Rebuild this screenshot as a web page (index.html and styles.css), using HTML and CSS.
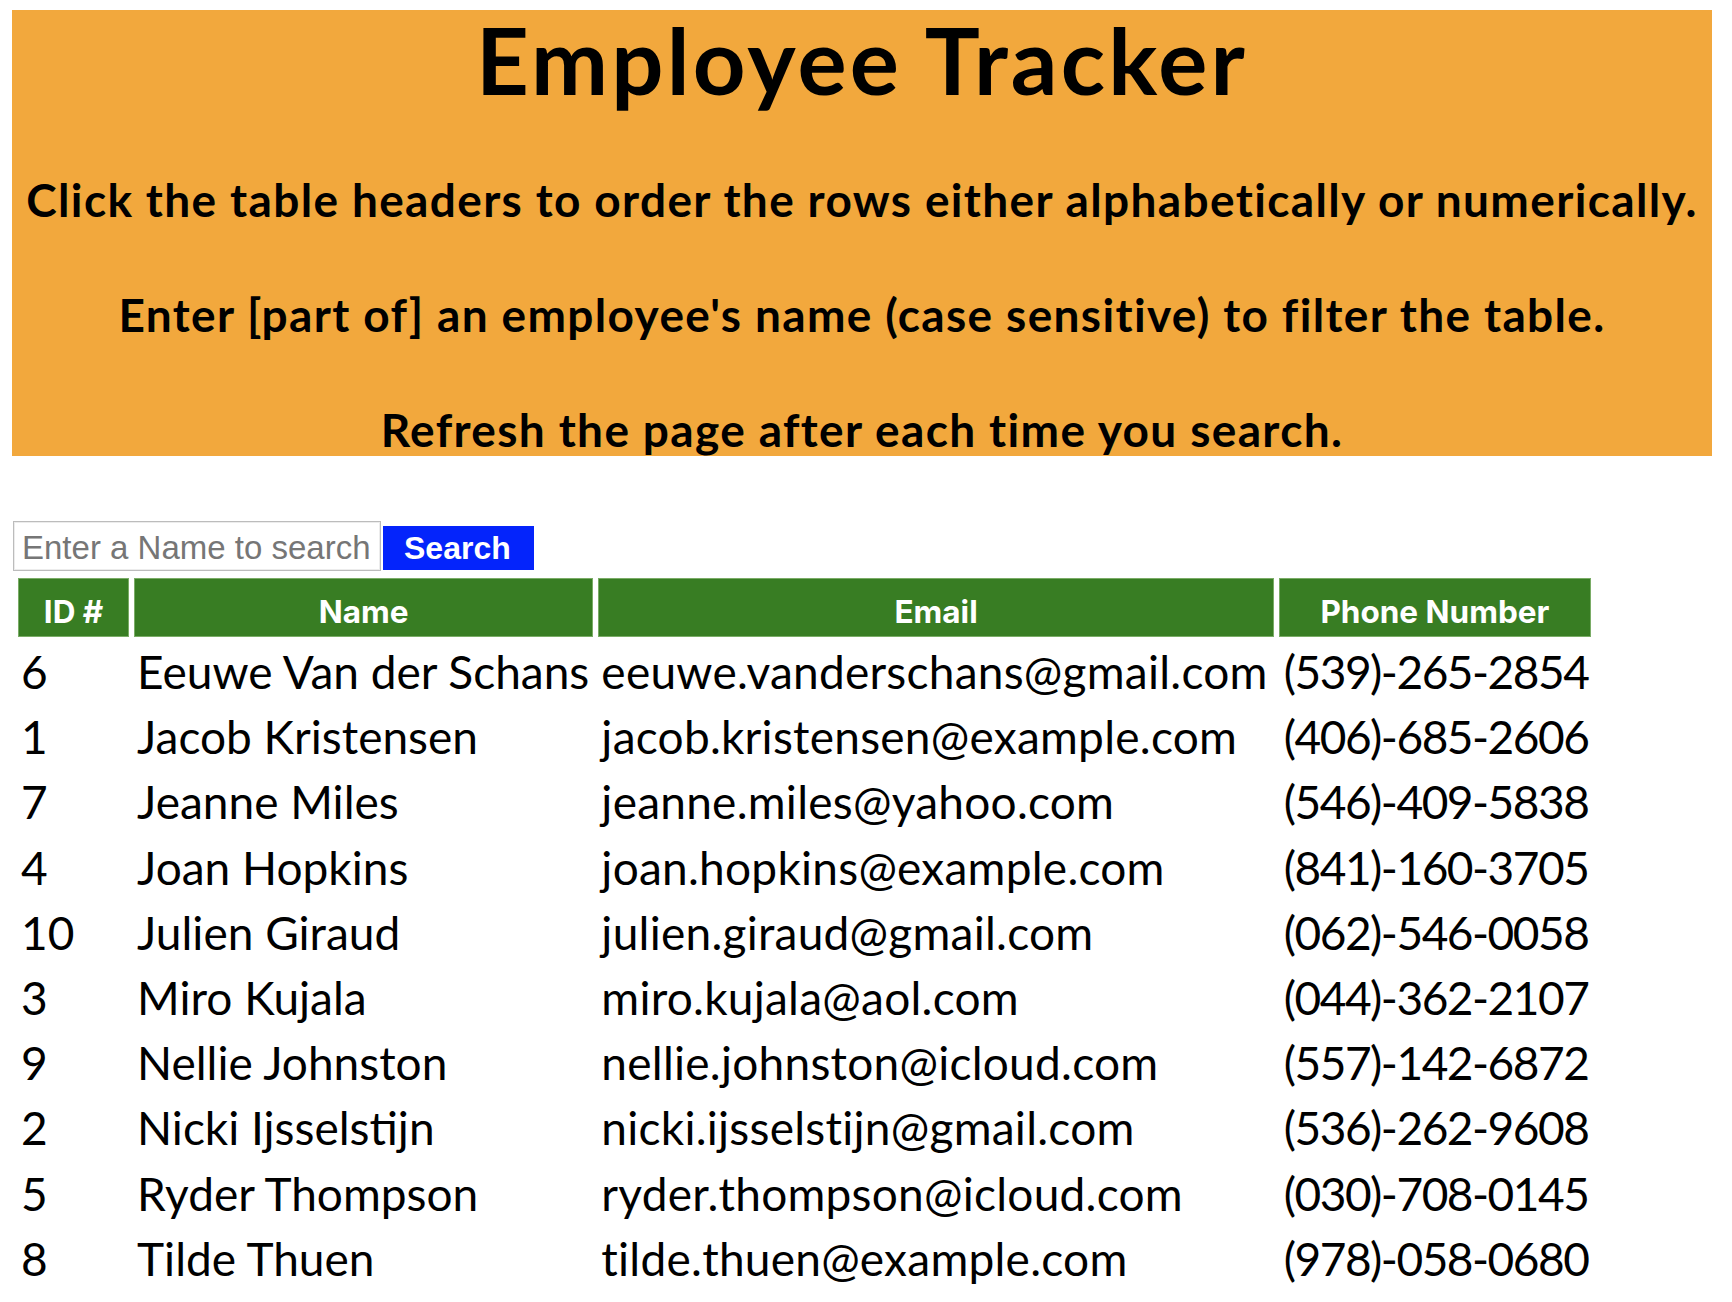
FILE: index.html
```html
<!DOCTYPE html>
<html lang="en">
<head>
<meta charset="utf-8">
<title>Employee Tracker</title>
<link rel="stylesheet" href="styles.css">
</head>
<body>
<header class="banner">
  <h1 class="title">Employee Tracker</h1>
  <p class="note">Click the table headers to order the rows either alphabetically or numerically.</p>
  <p class="note">Enter [part of] an employee's name (case sensitive) to filter the table.</p>
  <p class="note">Refresh the page after each time you search.</p>
</header>
<form class="search">
  <input class="search-input" type="text" placeholder="Enter a Name to search">
  <button class="search-btn" type="button">Search</button>
</form>
<table class="staff">
  <thead>
    <tr>
      <th class="col-id">ID #</th>
      <th class="col-name">Name</th>
      <th class="col-email">Email</th>
      <th class="col-phone">Phone Number</th>
    </tr>
  </thead>
  <tbody>
    <tr><td>6</td><td>Eeuwe Van der Schans</td><td class="email">eeuwe.vanderschans@gmail.com</td><td class="phone">(539)-265-2854</td></tr>
    <tr><td>1</td><td>Jacob Kristensen</td><td class="email">jacob.kristensen@example.com</td><td class="phone">(406)-685-2606</td></tr>
    <tr><td>7</td><td>Jeanne Miles</td><td class="email">jeanne.miles@yahoo.com</td><td class="phone">(546)-409-5838</td></tr>
    <tr><td>4</td><td>Joan Hopkins</td><td class="email">joan.hopkins@example.com</td><td class="phone">(841)-160-3705</td></tr>
    <tr><td>10</td><td>Julien Giraud</td><td class="email">julien.giraud@gmail.com</td><td class="phone">(062)-546-0058</td></tr>
    <tr><td>3</td><td>Miro Kujala</td><td class="email">miro.kujala@aol.com</td><td class="phone">(044)-362-2107</td></tr>
    <tr><td>9</td><td>Nellie Johnston</td><td class="email">nellie.johnston@icloud.com</td><td class="phone">(557)-142-6872</td></tr>
    <tr><td>2</td><td>Nicki Ijsselstijn</td><td class="email">nicki.ijsselstijn@gmail.com</td><td class="phone">(536)-262-9608</td></tr>
    <tr><td>5</td><td>Ryder Thompson</td><td class="email">ryder.thompson@icloud.com</td><td class="phone">(030)-708-0145</td></tr>
    <tr><td>8</td><td>Tilde Thuen</td><td class="email">tilde.thuen@example.com</td><td class="phone">(978)-058-0680</td></tr>
  </tbody>
</table>
</body>
</html>
```
FILE: styles.css
```css
html, body {
  background: #ffffff;
}
body {
  margin: 0;
  padding: 10px 20px 0 12px;
  font-family: Lato, "DejaVu Sans", sans-serif;
  color: #000;
}
.banner {
  background: #f2a83d;
  text-align: center;
  padding: 0 0 1px;
}
.title {
  margin: 0;
  font-size: 92px;
  line-height: 100px;
  font-weight: 700;
  letter-spacing: 3.2px;
}
.note {
  margin: 65px 0 0;
  font-size: 46px;
  line-height: 50px;
  font-weight: 700;
  letter-spacing: 1.35px;
}
.search {
  display: flex;
  align-items: flex-start;
  margin: 65px 0 0 1px;
}
.search-input {
  box-sizing: border-box;
  width: 368px;
  height: 50px;
  margin: 0;
  padding: 4px 8px 0;
  border: 1px solid #bcbcbc;
  box-shadow: inset 0 0 0 1px #ececec;
  font-family: "Liberation Sans", Arial, sans-serif;
  font-size: 33px;
  color: #000;
  outline: none;
}
.search-input::placeholder {
  color: #767676;
}
.search-btn {
  box-sizing: border-box;
  width: 151px;
  height: 44px;
  margin: 5px 0 0 2px;
  padding: 0 0 0 21px;
  border: 0;
  background: #0424fb;
  color: #fff;
  font-family: "Liberation Sans", Arial, sans-serif;
  font-weight: 700;
  font-size: 32px;
  line-height: 44px;
  text-align: left;
}
.staff {
  margin: 3px 0 0 1px;
  border-collapse: separate;
  border-spacing: 5px 4px;
  table-layout: fixed;
  width: 1583px;
}
.staff th {
  box-sizing: border-box;
  height: 59px;
  padding: 8px 2px 0;
  background: #387d23;
  border: 1px solid #7aac66;
  color: #fff;
  font-family: Inter, "Liberation Sans", sans-serif;
  font-weight: 700;
  font-size: 31.5px;
  line-height: 49px;
  text-align: center;
  vertical-align: top;
}
.col-id { width: 111px; }
.col-name { width: 459px; }
.col-email { width: 675px; }
.col-phone { width: 312px; }
.staff td {
  padding: 2px 0 2px 3px;
  font-size: 46px;
  line-height: 57.2px;
  white-space: nowrap;
  vertical-align: top;
}
.staff td.email {
  letter-spacing: 0.25px;
}
.staff td.phone {
  padding-left: 5px;
  letter-spacing: -1.5px;
}
```
